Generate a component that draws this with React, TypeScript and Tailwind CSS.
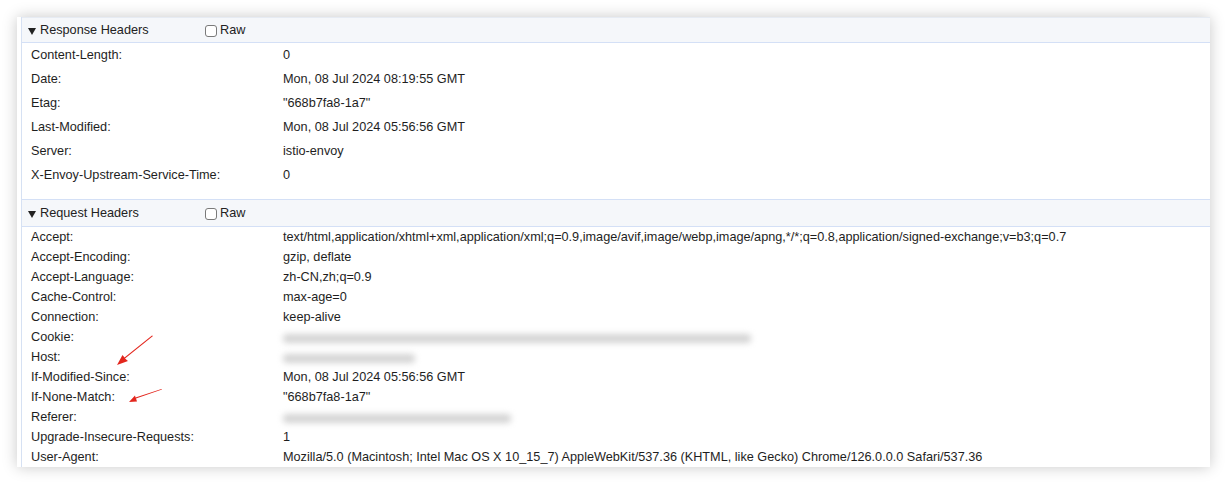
import React from "react";

const responseRows: [string, string][] = [
  ["Content-Length:", "0"],
  ["Date:", "Mon, 08 Jul 2024 08:19:55 GMT"],
  ["Etag:", "\"668b7fa8-1a7\""],
  ["Last-Modified:", "Mon, 08 Jul 2024 05:56:56 GMT"],
  ["Server:", "istio-envoy"],
  ["X-Envoy-Upstream-Service-Time:", "0"],
];

type Row = { name: string; value?: string; blur?: number };

const requestRows: Row[] = [
  { name: "Accept:", value: "text/html,application/xhtml+xml,application/xml;q=0.9,image/avif,image/webp,image/apng,*/*;q=0.8,application/signed-exchange;v=b3;q=0.7" },
  { name: "Accept-Encoding:", value: "gzip, deflate" },
  { name: "Accept-Language:", value: "zh-CN,zh;q=0.9" },
  { name: "Cache-Control:", value: "max-age=0" },
  { name: "Connection:", value: "keep-alive" },
  { name: "Cookie:", blur: 468 },
  { name: "Host:", blur: 132 },
  { name: "If-Modified-Since:", value: "Mon, 08 Jul 2024 05:56:56 GMT" },
  { name: "If-None-Match:", value: "\"668b7fa8-1a7\"" },
  { name: "Referer:", blur: 228 },
  { name: "Upgrade-Insecure-Requests:", value: "1" },
  { name: "User-Agent:", value: "Mozilla/5.0 (Macintosh; Intel Mac OS X 10_15_7) AppleWebKit/537.36 (KHTML, like Gecko) Chrome/126.0.0.0 Safari/537.36" },
];

function SectionHeader({ title, tall }: { title: string; tall?: boolean }) {
  return (
    <div
      className={
        "flex items-center border-b border-[#d4e0f6] bg-[#f5f7fa] pt-[2px] text-[#222] " +
        (tall ? "h-[27px]" : "h-[25px]")
      }
    >
      <svg className="ml-[6px] mr-[4px]" width="8" height="7" viewBox="0 0 8 7">
        <polygon points="0,0 8,0 4,7" fill="#222" />
      </svg>
      <span className="w-[165px]">{title}</span>
      <span className="flex items-center gap-[3px]">
        <span className="inline-block h-[12px] w-[12px] rounded-[3px] border border-[#7a7a7a] bg-white" />
        <span>Raw</span>
      </span>
    </div>
  );
}

function BlurValue({ w }: { w: number }) {
  return (
    <div className="flex h-full items-center" style={{ width: w }}>
      <div className="h-[9px] w-full rounded-sm bg-[#d3d3d3] blur-[3px]" />
    </div>
  );
}

export default function App() {
  return (
    <div
      className="relative h-[485px] w-[1228px] overflow-hidden bg-white pl-[17px] pt-[17px] text-[12.7px] text-[#1e1e1e]"
      style={{ fontFamily: '"Liberation Sans", Arial, sans-serif' }}
    >
      <div className="h-[450px] w-[1193px] overflow-hidden bg-white pl-[4px] shadow-[0_0_14px_rgba(0,0,0,0.22)]">
        <div className="h-full border-l border-[#d6e1f3]">
          <div className="border-t border-[#e6ebf3]">
            <SectionHeader title="Response Headers" />
            <div className="pb-[12px]">
              {responseRows.map(([n, v]) => (
                <div key={n} className="flex h-[24px] items-center pt-[2px]">
                  <div className="w-[261px] pl-[9px]">{n}</div>
                  <div>{v}</div>
                </div>
              ))}
            </div>
          </div>
          <div className="border-t border-[#d4e0f6]">
            <SectionHeader title="Request Headers" tall />
            <div>
              {requestRows.map((r) => (
                <div key={r.name} className="flex h-[20px] items-center pt-[2px]">
                  <div className="w-[261px] pl-[9px]">{r.name}</div>
                  {r.blur ? <BlurValue w={r.blur} /> : <div className="whitespace-nowrap">{r.value}</div>}
                </div>
              ))}
            </div>
          </div>
        </div>
      </div>

      <svg className="pointer-events-none absolute left-0 top-0" width="1228" height="485">
        <path d="M153 336 L125 358.5 L128 361 L117 365 L122.5 355 L124.5 357.5 L152 335.5 Z" fill="#e3261d" />
        <path d="M162 389.5 L136 398.5 L137 401.5 L129 402 L135 395.5 L135.5 397.5 L161.5 389 Z" fill="#e3261d" />
      </svg>
    </div>
  );
}
